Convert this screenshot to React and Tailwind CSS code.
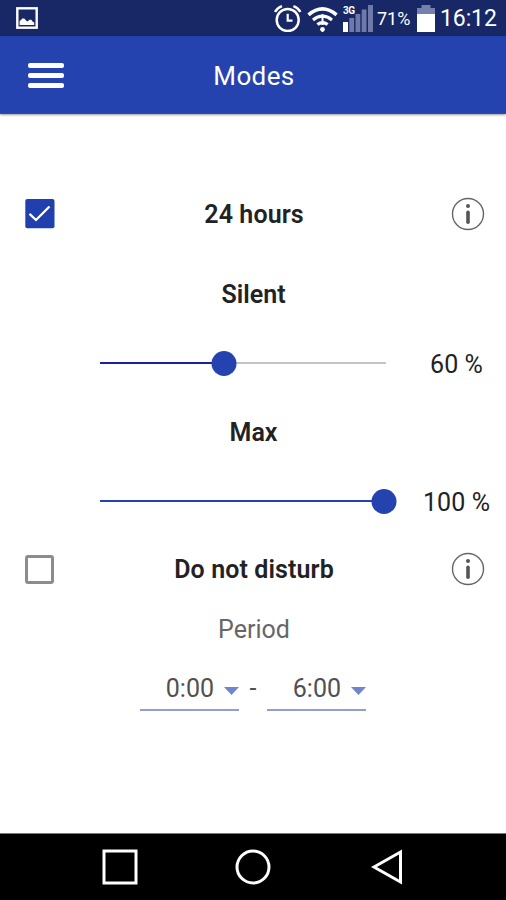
import React from 'react';

const PictureIcon = () => (
  <svg className="ml-4 h-[22px] w-[22px]" viewBox="0 0 22 22" fill="none">
    <rect x="1.3" y="1.3" width="19.4" height="19.4" stroke="#fff" strokeWidth="2.4" />
    <path d="M3.6 18V14L5 13L6.3 11.4H8.3L10 13.6L11.5 14.4L13.5 12.8H15.3L16.5 14.6L18.2 15.6V18Z" fill="#fff" />
  </svg>
);

const AlarmIcon = () => (
  <svg className="h-7 w-7" viewBox="0 0 28 28" fill="none" stroke="#fff">
    <circle cx="13.7" cy="16" r="11" strokeWidth="2.5" />
    <path d="M13.7 9.8V16.6H18.5" strokeWidth="2.2" />
    <path d="M1 8Q3.2 3.8 8 2.2M26.4 8Q24.2 3.8 19.4 2.2" strokeWidth="2.4" />
  </svg>
);

const WifiIcon = () => (
  <svg className="ml-[5px] h-7 w-[31px]" viewBox="0 0 31 28" fill="none" stroke="#fff">
    <path d="M1.5 10.8Q15.5 -1.2 29.5 10.8" strokeWidth="3.6" />
    <path d="M6 16Q15.5 8.4 25 16" strokeWidth="3.2" />
    <path d="M10.4 20.6Q15.5 16.6 20.6 20.6" strokeWidth="3.2" />
    <path d="M15.5 9.8L11.8 13.5H19.2ZM15.5 29L13 25H18Z" fill="#fff" stroke="none" />
    <path d="M15.5 13V21" strokeWidth="2" />
    <circle cx="15.5" cy="25.2" r="2.3" fill="#fff" stroke="none" />
  </svg>
);

const SignalIcon = () => (
  <div className="relative ml-[5px] h-[27px] w-[30px]">
    <svg className="h-[27px] w-[30px]" viewBox="0 0 30 27" fill="#6f79a8">
      <rect x="0" y="17" width="5" height="10" fill="#fff" />
      <rect x="6.3" y="13" width="4.8" height="14" />
      <rect x="12.5" y="9" width="4.8" height="18" />
      <rect x="18.7" y="4.5" width="4.8" height="22.5" />
      <rect x="25" y="0" width="5" height="27" />
    </svg>
    <span className="absolute left-0 top-0 text-[10px] font-bold leading-[11px] tracking-[-0.6px] text-white">3G</span>
  </div>
);

const BatteryIcon = () => (
  <svg className="ml-[6px] h-[27px] w-[18px]" viewBox="0 0 18 27">
    <path d="M4.5 0H13.5V3H18V9H0V3H4.5Z" fill="#7680ad" />
    <rect y="9" width="18" height="18" fill="#fff" />
  </svg>
);

const StatusBar = () => (
  <div className="flex h-9 items-center bg-[#182766] text-white">
    <PictureIcon />
    <div className="ml-auto flex items-center">
      <AlarmIcon />
      <WifiIcon />
      <SignalIcon />
      <span className="ml-[4px] w-[34px] whitespace-nowrap pt-0.5 text-[18px] leading-7">71%</span>
      <BatteryIcon />
      <span className="ml-[5px] w-[66px] whitespace-nowrap pt-0.5 text-[23px] leading-7 tracking-[-0.1px]">16:12</span>
    </div>
  </div>
);

const Header = () => (
  <header className="grid h-[78px] grid-cols-[1fr_auto_1fr] items-center border-b border-[#3a4c91] bg-[#2443af] shadow-[0_1px_2px_rgba(0,0,0,0.4)]">
    <div className="ml-7 flex w-9 flex-col gap-[5px] pt-px">
      <span className="h-[5px] rounded-[2px] bg-white" />
      <span className="h-[5px] rounded-[2px] bg-white" />
      <span className="h-[5px] rounded-[2px] bg-white" />
    </div>
    <h1 className="pl-0.5 pt-[3px] text-[26px] tracking-[0.4px] text-white">Modes</h1>
  </header>
);

const InfoIcon = () => (
  <svg className="h-[34px] w-[34px] justify-self-end" viewBox="0 0 34 34" fill="none">
    <circle cx="17" cy="17" r="15.5" stroke="#666" strokeWidth="1.4" />
    <circle cx="17" cy="9" r="2" fill="#555" />
    <path d="M17 15.2V25.2" stroke="#555" strokeWidth="3.6" strokeLinecap="round" />
  </svg>
);

const Checkbox = ({ checked = false }) =>
  checked ? (
    <svg className="h-[30px] w-[30px]" viewBox="0 0 30 30" fill="none">
      <rect x="0.3" y="0" width="29.2" height="29.2" rx="2" fill="#2140ae" />
      <path d="M4.5 14.8L11 21L24.5 7.5" stroke="#fff" strokeWidth="2.3" />
    </svg>
  ) : (
    <div className="h-[29px] w-[29px] rounded-[3px] border-[3px] border-[#8c8c8c]" />
  );

const OptionRow = ({ label, checked }) => (
  <div className="grid h-10 grid-cols-[1fr_auto_1fr] items-center pl-[25px] pr-[21px]">
    <Checkbox checked={checked} />
    <span className="-ml-[3px] pl-px pt-0.5 text-[25px] font-semibold tracking-[0.1px]">{label}</span>
    <InfoIcon />
  </div>
);

const SliderRow = ({ position, value, trackColor }) => (
  <div className="flex h-10 items-center pl-[100px]">
    <div className="relative flex h-[26px] w-[286px] shrink-0 items-center">
      <div className="h-[2px] w-full bg-[#c4c4c4]" />
      <div className={`absolute left-0 h-[2.5px] ${trackColor}`} style={{ width: `${position}px` }} />
      <div
        className="absolute h-[25px] w-[25px] -translate-x-1/2 rounded-full bg-[#2443af]"
        style={{ left: `${position}px` }}
      />
    </div>
    <span className="ml-5 w-[100px] pl-px pt-1 text-center text-[25px] leading-9 tracking-[0.1px]">{value}</span>
  </div>
);

const TimeSelect = ({ value }) => (
  <div className="flex h-[42px] w-[99px] items-start justify-end border-b-2 border-[#8ea0d6]">
    <span className="text-[25px] leading-10">{value}</span>
    <svg className="ml-[10px] mt-[18px] h-2 w-[15px]" viewBox="0 0 15 8">
      <path d="M0 0H15L7.5 8Z" fill="#6f86ce" />
    </svg>
  </div>
);

const NavBar = () => (
  <nav className="mt-auto flex h-[67px] items-center border-t border-[#777] bg-black pl-[102px]">
    <svg className="h-9 w-9" viewBox="0 0 36 36" fill="none" stroke="#fff" strokeWidth="3">
      <rect x="2" y="2" width="32" height="32" />
    </svg>
    <svg className="ml-[97px] h-9 w-9" viewBox="0 0 36 36" fill="none" stroke="#fff" strokeWidth="3">
      <circle cx="18" cy="18" r="16" />
    </svg>
    <svg className="ml-[99px] h-9 w-9" viewBox="0 0 36 36" fill="none" stroke="#fff" strokeWidth="3">
      <path d="M4 18L30.5 3V33Z" />
    </svg>
  </nav>
);

const App = () => {
  return (
    <div className="flex h-[900px] w-[506px] flex-col overflow-hidden bg-white font-['Roboto',sans-serif] text-[#222]">
      <StatusBar />
      <Header />

      <main className="pt-20">
        <OptionRow label="24 hours" checked />
        <h2 className="mt-[41px] pl-px text-center text-[25px] font-semibold leading-10">Silent</h2>
        <div className="mt-7">
          <SliderRow position={123.5} value="60 %" trackColor="bg-[#1b1fa3]" />
        </div>
        <h2 className="mt-[30px] pl-px text-center text-[25px] font-semibold leading-10">Max</h2>
        <div className="mt-7">
          <SliderRow position={283.5} value="100 %" trackColor="bg-[#2443af]" />
        </div>

        <div className="mt-7">
          <OptionRow label="Do not disturb" />
        </div>
        <p className="mt-[21px] pl-0.5 text-center text-[25px] leading-10 text-[#666]">Period</p>
        <div className="mt-[19px] flex justify-center text-[#505050]">
          <TimeSelect value="0:00" />
          <span className="w-7 text-center text-[25px] leading-10">-</span>
          <TimeSelect value="6:00" />
        </div>
      </main>

      <NavBar />
    </div>
  );
};

export default App;
